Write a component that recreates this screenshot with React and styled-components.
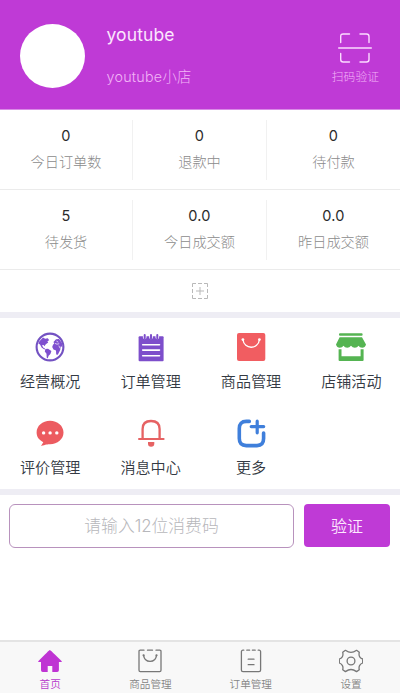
import React from "react";
import styled, { createGlobalStyle } from "styled-components";

const GlobalStyle = createGlobalStyle`
  * {
    box-sizing: border-box;
  }

  body {
    margin: 0;
    background-color: #fff;
    font-family: Inter, "Noto Sans CJK SC", sans-serif;
    font-weight: 300;
  }
`;

const Page = styled.div`
  display: flex;
  flex-direction: column;
  width: 400px;
  height: 693px;
  overflow: hidden;
  background-color: #fff;
`;

const Header = styled.header`
  display: flex;
  height: 110px;
  padding: 24px 21px 0 20px;
  background-color: #bf3ad6;
  border-bottom: 1px solid #d98be6;
`;

const Avatar = styled.div`
  width: 65px;
  height: 64px;
  border-radius: 50%;
  background-color: #fff;
`;

const Profile = styled.div`
  flex: 1;
  padding-left: 21.5px;
`;

const UserName = styled.div`
  line-height: 22px;
  font-size: 17.5px;
  font-weight: 400;
  letter-spacing: 0.1px;
  color: #fbe6fd;
`;

const ShopName = styled.div`
  margin-top: 20px;
  line-height: 22px;
  font-size: 14.3px;
  letter-spacing: 0.25px;
  color: #f2b4f7;
`;

const ScanButton = styled.div`
  display: flex;
  flex-direction: column;
  align-items: center;
  padding-top: 8px;
  line-height: 18px;
  font-size: 11.8px;
  color: #f2b4f7;

  svg {
    margin-bottom: 4px;
  }
`;

const Stats = styled.section`
  display: grid;
  grid-template-columns: 133px 134px 133px;
`;

const Stat = styled.div`
  display: flex;
  flex-direction: column;
  align-items: center;
  height: 80px;
  padding-top: 10px;
  border-bottom: 1px solid #ebebeb;
`;

const StatBody = styled.div`
  width: 100%;
  height: 60px;
  padding-top: 6px;
  text-align: center;
  border-right: ${({ $last }) => ($last ? "none" : "1px solid #f1f1f1")};
`;

const StatValue = styled.div`
  line-height: 20px;
  font-size: 14.5px;
  font-weight: 400;
  letter-spacing: 0.3px;
  color: #2b2b2b;
`;

const StatLabel = styled.div`
  margin-top: 6px;
  line-height: 20px;
  font-size: 14.2px;
  color: #8b8b8b;
`;

const AddRow = styled.div`
  display: flex;
  justify-content: center;
  align-items: center;
  height: 42px;
`;

const Gap = styled.div`
  height: ${({ $height }) => $height}px;
  background-color: #eeedf4;
`;

const Menu = styled.section`
  display: grid;
  grid-template-columns: repeat(4, 100.4px);
  height: 171px;
`;

const MenuItem = styled.div`
  display: flex;
  flex-direction: column;
  align-items: center;
  height: 85.5px;
  padding-top: 14px;
  line-height: 24px;
  font-size: 15.1px;
  font-weight: 350;
  color: #343a43;

  svg {
    margin-bottom: 8px;
  }
`;

const VerifyBar = styled.section`
  display: flex;
  gap: 10px;
  padding: 9px 10px 0 9px;
`;

const CodeInput = styled.input`
  width: 285px;
  height: 44px;
  padding: 0 0 1px;
  border: 1px solid #b892bd;
  border-radius: 6px;
  outline: none;
  background-color: #fff;
  font-family: inherit;
  font-size: 16.8px;
  font-weight: 300;
  text-align: center;

  &::placeholder {
    color: #b7b7bb;
    opacity: 1;
  }
`;

const VerifyButton = styled.button`
  width: 86px;
  height: 43px;
  padding: 0 0 1px;
  border: 0;
  border-radius: 4px;
  background-color: #bf3ad6;
  font-family: inherit;
  font-size: 16px;
  font-weight: 350;
  color: #fdeaff;
`;

const TabBar = styled.nav`
  display: grid;
  grid-template-columns: repeat(4, 100.3px);
  height: 53px;
  margin-top: auto;
  border-top: 2px solid #e4e4e4;
  background-color: #f8f8f8;
`;

const Tab = styled.div`
  display: flex;
  flex-direction: column;
  align-items: center;
  padding-top: 7px;
  line-height: 16px;
  font-size: 10.6px;
  font-weight: 350;
  color: ${({ $active }) => ($active ? "#b63acb" : "#858585")};

  svg {
    margin-bottom: 4px;
  }
`;

const Icon = ({ width = 30, height = 30, children }) => (
  <svg
    width={width}
    height={height}
    viewBox={`0 0 ${width} ${height}`}
    fill="none"
    strokeLinecap="round"
    strokeLinejoin="round"
  >
    {children}
  </svg>
);

const ScanIcon = () => (
  <Icon width={34} height={32}>
    <g stroke="#fbdcff" strokeWidth="1.4">
      <path d="M2.7 10.5V4.5Q2.7 2 5.2 2H11.5M22 2H28.5Q31 2 31 4.5V10.5M31 21.5V27.5Q31 30 28.5 30H22M11.5 30H5.2Q2.7 30 2.7 27.5V21.5" />
      <path d="M.7 16H33.3" />
    </g>
  </Icon>
);

const AddIcon = () => (
  <Icon width={16} height={16}>
    <g stroke="#b9b9b9" strokeWidth="1" strokeLinecap="butt">
      <path d="M.5 4V.5H4M6 .5H10M12 .5H15.5V4M15.5 6V10M15.5 12V15.5H12M10 15.5H6M4 15.5H.5V12M.5 10V6" />
      <path d="M8 4V12M4 8H12" />
    </g>
  </Icon>
);

const GlobeIcon = () => (
  <Icon>
    <circle cx="15" cy="15" r="13.4" stroke="#7352c2" strokeWidth="2.1" />
    <g fill="#7f50cf">
      <path d="M4.2 9.5 8 5.5 10.2 6.8 12.8 6.2 14.2 8.2 12.4 9.2 13.2 10.5 10.8 12.3 9.4 14.2 8.6 13 7 13.3 8.2 15.6 10.2 16.8 9.4 17.4 6.6 15.6 5 12.4 3.4 11.6Z" />
      <path d="M10.4 17 13 16.8 16.4 19.1 15.4 22 13.6 23.8 12.7 26.6 11.7 25.5 11.5 21.8 9.8 19.4Z" />
      <path d="M18 12.8 19.2 11.4 18.5 10 21 7.2 24 6.9 27.2 11.2 27.5 15.5 25.9 14.1 25.2 18.1 22.8 22.7 21.2 22.5 21 18.4 18.5 17.6 17.2 15Z" />
    </g>
    <path d="M20.2 11.5 22 12.2 23.8 11.8M24 14 25 16M21.8 9.3 23 10" stroke="#fff" strokeWidth=".7" />
  </Icon>
);

const OrderIcon = () => (
  <Icon>
    <rect x="2.6" y="4.2" width="25" height="25" rx="1" fill="#7d4ecb" />
    <g stroke="#fff" strokeWidth="3.6">
      <path d="M8.7 3V5.5M15 3V5.5M21.3 3V5.5" />
    </g>
    <g stroke="#7d4ecb" strokeWidth="2">
      <path d="M8.7 3V6.5M15 3V6.5M21.3 3V6.5" />
    </g>
    <path d="M6.7 12.7H23.5M6.7 18.1H23.5M6.7 23.7H23.5" stroke="#fff" strokeWidth="1.6" />
  </Icon>
);

const GoodsIcon = () => (
  <Icon>
    <rect x="1" y="1" width="28.3" height="28" rx="2" fill="#f15d61" />
    <path d="M7 7.8C8 17.7 22.3 17.7 23.4 7.8" stroke="#fff" strokeWidth="1.3" />
    <circle cx="6.9" cy="7.6" r="1.4" fill="#fff" />
    <circle cx="23.4" cy="7.6" r="1.4" fill="#fff" />
  </Icon>
);

const ShopIcon = () => (
  <Icon>
    <rect x="3" y="1.3" width="23.6" height="2.5" rx="1" fill="#55b452" />
    <path
      d="M3.6 5.3H26L30 12.5Q29 15.7 26.2 15.7 23.6 15.7 22.5 13.7 21.2 15.8 18.9 15.8 16.5 15.8 15 13.7 13.5 15.8 11.2 15.8 8.7 15.8 7.5 13.7 6.2 15.7 3.8 15.7 1 15.7 0 12.5Z"
      fill="#55b452"
    />
    <path d="M2.6 17.2H5.5V24.2H24.6V17.2H27.6V28Q27.6 29 26.6 29H3.6Q2.6 29 2.6 28Z" fill="#55b452" />
  </Icon>
);

const CommentIcon = () => (
  <Icon>
    <path
      d="M15 2.8C22.6 2.8 28.5 7.9 28.5 14.6S22.6 26.2 15 26.2C12.7 26.2 10.7 26.6 6 28L8.3 24.3C4 22.1 1.6 18.9 1.6 14.6 1.6 7.9 7.4 2.8 15 2.8Z"
      fill="#ec5b60"
    />
    <g fill="#fff">
      <circle cx="8.6" cy="14.9" r="1.7" />
      <circle cx="15.1" cy="14.9" r="1.7" />
      <circle cx="21.8" cy="14.9" r="1.7" />
    </g>
  </Icon>
);

const BellIcon = () => (
  <Icon>
    <path d="M6.6 20V11Q6.6 3 15 3 23.6 3 23.6 11V20" stroke="#e66263" strokeWidth="2.3" />
    <path d="M3 21H27.6" stroke="#e66263" strokeWidth="2" />
    <path d="M12 24H18.3V25.5Q18.3 28.8 15.1 28.8 12 28.8 12 25.5Z" fill="#e66263" />
  </Icon>
);

const MoreIcon = () => (
  <Icon>
    <g stroke="#3f7fdb" strokeWidth="3.6">
      <path d="M13.3 3.4H10.3Q3.3 3.4 3.3 10.4V20.6Q3.3 27.6 10.3 27.6H21Q27.6 27.6 27.6 20.6V15" />
      <path d="M21.2 3.2V14.8M15.2 8.6H27.7" strokeWidth="3.2" />
    </g>
  </Icon>
);

const HomeTabIcon = () => (
  <Icon width={24} height={24}>
    <path
      d="M11.8 1Q12.5 1 24 12.5L23.3 13.1H20.9V21.2Q20.9 23 19.2 23H14.3V17H9.7V23H4.7Q3 23 3 21.2V13.1H.7L0 12.5Q11.2 1 11.8 1Z"
      fill="#bf34d3"
    />
  </Icon>
);

const GoodsTabIcon = () => (
  <Icon width={24} height={24}>
    <g stroke="#777" strokeWidth="1.3">
      <path d="M6 1.2H2.2Q1 1.2 1 2.4V21.2Q1 22.6 2.4 22.6H21.6Q23 22.6 23 21.2V2.4Q23 1.2 21.8 1.2H18M9.5 1.2H14.5" />
      <path d="M5.6 6.4C6.7 14.4 17.5 14.4 18.5 6.4" />
    </g>
    <circle cx="5.6" cy="6.3" r="1.1" fill="#777" />
    <circle cx="18.5" cy="6.3" r="1.1" fill="#777" />
  </Icon>
);

const OrderTabIcon = () => (
  <Icon width={24} height={24}>
    <g stroke="#777" strokeWidth="1.3">
      <path d="M4.8 1.2H4Q2.4 1.2 2.4 2.8V21Q2.4 22.6 4 22.6H20Q21.6 22.6 21.6 21V2.8Q21.6 1.2 20 1.2H19.2M7.8 1.2H10.6M13.4 1.2H16.2" />
      <path d="M9.2 10.2H15M9.2 15.7H15" />
    </g>
  </Icon>
);

const SettingsTabIcon = () => (
  <Icon width={24} height={24}>
    <g stroke="#777" strokeWidth="1.3">
      <path d="M6.4 1.3Q9.4 3.4 12 3.4T17.6 1.3L20.3 3.2Q19.6 6.1 20.7 7.8T23.7 10V14Q21.8 14.7 20.7 16.3T20.3 20.8L17.6 22.6Q14.5 20.5 12 20.5T6.4 22.6L3.7 20.8Q4.4 18 3.3 16.3T.3 14V10Q2.2 9.4 3.3 7.8T3.7 3.2Z" />
      <circle cx="12" cy="12" r="3.9" />
    </g>
  </Icon>
);

const stats = [
  { value: "0", label: "今日订单数" },
  { value: "0", label: "退款中" },
  { value: "0", label: "待付款" },
  { value: "5", label: "待发货" },
  { value: "0.0", label: "今日成交额" },
  { value: "0.0", label: "昨日成交额" },
];

const menu = [
  { name: "经营概况", icon: <GlobeIcon /> },
  { name: "订单管理", icon: <OrderIcon /> },
  { name: "商品管理", icon: <GoodsIcon /> },
  { name: "店铺活动", icon: <ShopIcon /> },
  { name: "评价管理", icon: <CommentIcon /> },
  { name: "消息中心", icon: <BellIcon /> },
  { name: "更多", icon: <MoreIcon /> },
];

const tabs = [
  { name: "首页", icon: <HomeTabIcon /> },
  { name: "商品管理", icon: <GoodsTabIcon /> },
  { name: "订单管理", icon: <OrderTabIcon /> },
  { name: "设置", icon: <SettingsTabIcon /> },
];

const App = () => {
  return (
    <>
      <GlobalStyle />
      <Page>
        <Header>
          <Avatar />
          <Profile>
            <UserName>youtube</UserName>
            <ShopName>youtube小店</ShopName>
          </Profile>
          <ScanButton>
            <ScanIcon />
            扫码验证
          </ScanButton>
        </Header>
        <Stats>
          {stats.map(({ value, label }, index) => (
            <Stat key={label}>
              <StatBody $last={index % 3 === 2}>
                <StatValue>{value}</StatValue>
                <StatLabel>{label}</StatLabel>
              </StatBody>
            </Stat>
          ))}
        </Stats>
        <AddRow>
          <AddIcon />
        </AddRow>
        <Gap $height={6} />
        <Menu>
          {menu.map(({ name, icon }) => (
            <MenuItem key={name}>
              {icon}
              {name}
            </MenuItem>
          ))}
        </Menu>
        <Gap $height={6} />
        <VerifyBar>
          <CodeInput placeholder="请输入12位消费码" />
          <VerifyButton>验证</VerifyButton>
        </VerifyBar>
        <TabBar>
          {tabs.map(({ name, icon }, index) => (
            <Tab key={name} $active={index === 0}>
              {icon}
              {name}
            </Tab>
          ))}
        </TabBar>
      </Page>
    </>
  );
};

export default App;
